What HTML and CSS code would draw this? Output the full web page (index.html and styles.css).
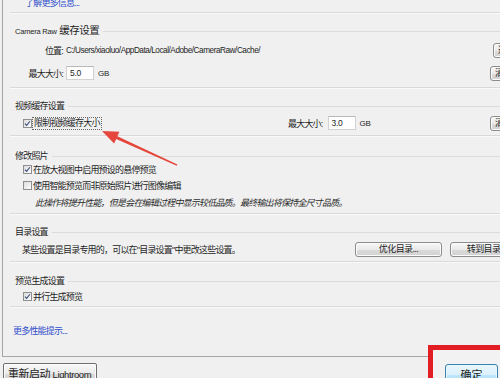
FILE: index.html
```html
<!DOCTYPE html>
<html lang="zh-CN">
<head>
<meta charset="utf-8">
<title>性能</title>
<link rel="stylesheet" href="styles.css">
</head>
<body>
<div class="window">
  <div class="panel">
    <div class="content">
      <div class="group g-top">
        <a class="link link-info">了解更多信息...</a>
      </div>

      <div class="group g-raw">
        <div class="legend"><span class="legend-text"><span class="lat">Camera Raw</span> 缓存设置</span></div>
        <div class="row r1">
          <span class="lbl">位置:</span>
          <span class="path">C:/Users/xiaoluo/AppData/Local/Adobe/CameraRaw/Cache/</span>
          <button class="btn btn-edge btn-choose">选择...</button>
        </div>
        <div class="row r2">
          <span class="lbl">最大大小:</span>
          <span class="input">5.0</span><span class="unit">GB</span>
          <button class="btn btn-edge btn-clear">清空缓存</button>
        </div>
      </div>

      <div class="group g-video">
        <div class="legend"><span class="legend-text">视频缓存设置</span></div>
        <div class="row r-video">
          <label class="cbfield cbfield-video">
            <span class="cb"><svg viewBox="0 0 9 9" width="7" height="7"><path d="M1.2 4.6 L3.4 6.8 L7.6 1.6" fill="none" stroke="#3e527f" stroke-width="1.5"/></svg></span>
            <span class="focus">限制视频缓存大小</span>
          </label>
          <span class="lbl-inline">最大大小:</span>
          <span class="input input-video">3.0</span><span class="unit">GB</span>
          <button class="btn btn-edge btn-clear">清空缓存</button>
        </div>
      </div>

      <div class="group g-modify">
        <div class="legend"><span class="legend-text">修改照片</span></div>
        <label class="cbfield row-cb cb1">
          <span class="cb"><svg viewBox="0 0 9 9" width="7" height="7"><path d="M1.2 4.6 L3.4 6.8 L7.6 1.6" fill="none" stroke="#3e527f" stroke-width="1.5"/></svg></span>
          <span>在放大视图中启用预设的悬停预览</span>
        </label>
        <label class="cbfield row-cb cb2">
          <span class="cb"></span>
          <span>使用智能预览而非原始照片进行图像编辑</span>
        </label>
        <p class="note">此操作将提升性能，但是会在编辑过程中显示较低品质。最终输出将保持全尺寸品质。</p>
      </div>

      <div class="group g-catalog">
        <div class="legend"><span class="legend-text">目录设置</span></div>
        <div class="row r-catalog">
          <span class="cat-text">某些设置是目录专用的，可以在"目录设置"中更改这些设置。</span>
          <button class="btn btn-opt">优化目录...</button>
          <button class="btn btn-goto">转到目录设置</button>
        </div>
      </div>

      <div class="group g-preview">
        <div class="legend"><span class="legend-text">预览生成设置</span></div>
        <label class="cbfield row-cb cb3">
          <span class="cb"><svg viewBox="0 0 9 9" width="7" height="7"><path d="M1.2 4.6 L3.4 6.8 L7.6 1.6" fill="none" stroke="#3e527f" stroke-width="1.5"/></svg></span>
          <span>并行生成预览</span>
        </label>
      </div>

      <a class="link link-tips">更多性能提示...</a>
    </div>
  </div>

  <div class="footer">
    <button class="btn btn-restart">重新启动 <span class="lat-btn">Lightroom</span></button>
    <button class="btn btn-ok">确定</button>
  </div>

  <div class="redbox"></div>
  <svg class="arrow" width="500" height="378" viewBox="0 0 500 378">
    <polygon points="102,131 119.4,131.8 117.4,136.2 177.4,164.4 176.7,165.8 116.2,139 114.1,143.4" fill="#e5473c"/>
  </svg>
</div>
</body>
</html>
```

FILE: styles.css
```css
* { box-sizing: border-box; margin: 0; padding: 0; }

html, body {
  width: 500px;
  height: 378px;
  overflow: hidden;
}

body {
  background: #f0f0f0;
  font-family: "Liberation Sans", "Noto Sans CJK SC", sans-serif;
  font-size: 9px;
  letter-spacing: -0.8px;
  color: #1e1e1e;
}

.window {
  position: relative;
  width: 500px;
  height: 378px;
  overflow: hidden;
}

.panel {
  margin-left: 2px;
  width: 600px;
  height: 357px;
  border-left: 1px solid #a6a6a6;
  border-bottom: 1px solid #a6a6a6;
  padding-left: 7px;
  overflow: hidden;
}

.content {
  width: 546px;
}

.group {
  border-bottom: 1px solid #d9d9d9;
  box-shadow: 0 1px 0 #fafafa;
}

.link {
  display: block;
  color: #2f4fcc;
  line-height: 12px;
  height: 12px;
  cursor: pointer;
}

.g-top {
  margin-top: -3px;
  padding-bottom: 3px;
}

.link-info { padding-left: 15px; }

.legend {
  display: flex;
  align-items: center;
  height: 12px;
  line-height: 12px;
}

.legend-text {
  padding-left: 5px;
  white-space: nowrap;
}

.legend::after {
  content: "";
  flex: 1;
  margin-left: 4px;
  border-top: 1px solid #dcdcdc;
}

.g-raw .legend-text {
  font-size: 10.5px;
  letter-spacing: -0.5px;
}

.lat {
  font-size: 7.5px;
  letter-spacing: -0.2px;
}

.row {
  display: flex;
  align-items: center;
  height: 16px;
  white-space: nowrap;
}

/* Camera Raw group */
.g-raw { margin-top: 12px; padding-bottom: 6px; }
.r1 { margin-top: 5px; }
.r2 { margin-top: 7px; }

.lbl {
  width: 53px;
  text-align: right;
}

.path {
  margin-left: 3px;
  font-size: 8.2px;
  letter-spacing: -0.45px;
}

.input {
  display: inline-block;
  margin-left: 3px;
  width: 28px;
  height: 14px;
  line-height: 13px;
  padding-left: 3px;
  background: #fff;
  border: 1px solid #d2d2d2;
  border-top-color: #b9b9b9;
  font-size: 8.5px;
  letter-spacing: -0.3px;
}

.unit {
  margin-left: 4px;
  font-size: 8px;
  letter-spacing: -0.2px;
}

.btn {
  font-family: "Liberation Sans", "Noto Sans CJK SC", sans-serif;
  font-size: 9px;
  letter-spacing: -0.6px;
  color: #1e1e1e;
  height: 15px;
  line-height: 13px;
  border: 1px solid #8c8c8c;
  border-radius: 3px;
  background: linear-gradient(#f8f8f8, #e9e9e9 50%, #dadada 51%, #d2d2d2);
  box-shadow: inset 0 0 0 1px #fcfcfc;
  white-space: nowrap;
  overflow: hidden;
}

.btn-edge { margin-left: auto; text-align: left; padding-left: 4px; }
.btn-choose { width: 63px; height: 15px; }
.btn-clear { width: 66px; height: 15px; }

/* Video group */
.g-video { margin-top: 12px; padding-bottom: 4px; }
.r-video { margin-top: 3px; }

.cbfield {
  display: flex;
  align-items: center;
  white-space: nowrap;
}

.cbfield-video {
  width: 265px;
  margin-left: 13px;
}

.cb {
  display: inline-flex;
  align-items: center;
  justify-content: center;
  width: 9px;
  height: 9px;
  border: 1px solid #8e8f8f;
  background: linear-gradient(135deg, #dcdcdc, #fdfdfd);
  margin-right: 1px;
  flex: none;
}

.focus {
  outline: 1px dotted #666;
  outline-offset: 0;
  padding: 0 1px;
  line-height: 11px;
}

.lbl-inline { margin-left: 0; }
.input-video { margin-left: 5px; }

/* Modify group */
.g-modify { margin-top: 14px; padding-bottom: 3px; }
.row-cb {
  height: 14px;
  margin-left: 13px;
}
.cb1 { margin-top: 0; }
.cb2 { margin-top: 2px; }

.note {
  margin-top: 4px;
  height: 14px;
  line-height: 14px;
  padding-left: 25px;
  font-style: italic;
  color: #2c2c2c;
  white-space: nowrap;
}

/* Catalog group */
.g-catalog { margin-top: 12px; padding-bottom: 4px; }
.r-catalog { margin-top: 3px; }
.cat-text { padding-left: 12px; }
.btn-opt { margin-left: auto; width: 87px; }
.btn-goto { margin-left: 8px; margin-right: 22px; width: 84px; }

/* Preview group */
.g-preview { margin-top: 13px; padding-bottom: 3px; }
.cb3 { margin-top: 2px; }

.link-tips {
  margin-top: 18px;
  padding-left: 3px;
}

/* Footer */
.footer {
  display: flex;
  justify-content: space-between;
  align-items: flex-start;
  margin-top: 6px;
  padding: 0 2px 0 3px;
}

.btn-restart {
  width: 94px;
  height: 22px;
  line-height: 14px;
  font-size: 11px;
  letter-spacing: -0.5px;
  border-radius: 2px;
  border-color: #6f6f6f;
  text-align: left;
  padding-left: 4px;
}

.lat-btn {
  font-size: 9.5px;
  letter-spacing: -0.4px;
}

.btn-ok {
  position: relative;
  z-index: 2;
  width: 53px;
  height: 22px;
  margin-top: 1px;
  line-height: 14px;
  font-size: 11px;
  letter-spacing: 0;
  border-color: #3c7fb1;
  background: linear-gradient(#eaf6fd, #d9f0fc 50%, #bee6fd 51%, #a7d9f5);
  box-shadow: inset 0 0 0 1px #e8f6fe;
}

/* Annotations */
.redbox {
  position: absolute;
  left: 428px;
  top: 345px;
  width: 82px;
  height: 40px;
  border: 5px solid #e21d24;
  background: #f2f2f2;
  z-index: 1;
}

.arrow {
  position: absolute;
  left: 0;
  top: 0;
  z-index: 3;
  pointer-events: none;
}
```
